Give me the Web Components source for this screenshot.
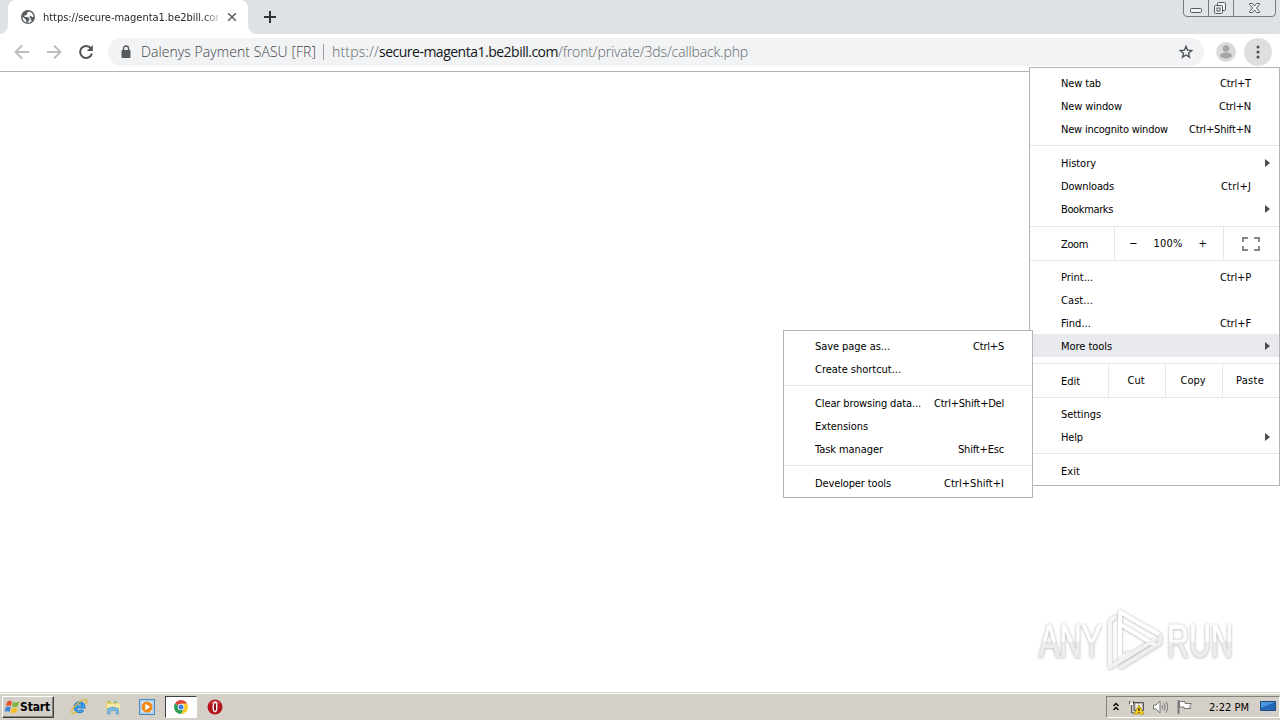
<!DOCTYPE html>
<html lang="en">
<head>
<meta charset="utf-8">
<title>Browser desktop</title>
<style>
  html, body { margin: 0; width: 1280px; height: 720px; overflow: hidden; background: #fff; }
  body { font: 11px/23px "DejaVu Sans Condensed", "DejaVu Sans", sans-serif; font-stretch: condensed; color: #000; }
</style>
</head>
<body>
<desk-top></desk-top>

<script>
/* Small helper: every element here renders once into an open shadow root. */
class Base extends HTMLElement {
  connectedCallback() {
    if (this._mounted) return;
    this._mounted = true;
    this.attachShadow({ mode: 'open' }).innerHTML = this.render();
    if (this.ready) this.ready();
  }
}

/* ── <fit-text w="40"> : a line of text tracked to an exact width ── */
class FitText extends Base {
  render() {
    return `
      <style>
        :host { display: block; white-space: nowrap; flex: none; }
        span { display: inline-block; white-space: pre; vertical-align: top; }
      </style>
      <span><slot></slot></span>`;
  }
  ready() {
    const w = Number(this.getAttribute('w'));
    if (!w) return;
    const span = this.shadowRoot.querySelector('span');
    const natural = span.getBoundingClientRect().width;
    span.style.letterSpacing = (w - natural) / this.textContent.length + 'px';
    this.style.width = w + 'px';
  }
}

/* ── <menu-item label keys w kw arrow active> ── */
class MenuItem extends Base {
  render() {
    const a = n => this.getAttribute(n);
    return `
      <style>
        :host { display: flex; box-sizing: border-box; height: 23px; line-height: 21px; align-items: center;
                padding: 2px 28px 0 31px; position: relative; }
        :host([active]) { background: #e8eaed; }
        .gap { flex: 1; }
        svg { position: absolute; right: 9px; top: 8px; }
      </style>
      <fit-text w="${a('w')}">${a('label')}</fit-text>
      <span class="gap"></span>
      ${a('keys') ? `<fit-text w="${a('kw')}">${a('keys')}</fit-text>` : ''}
      ${this.hasAttribute('arrow') ? '<svg width="5" height="8"><path d="M0 0L5 4L0 8Z" fill="#4b4c4f"/></svg>' : ''}`;
  }
}

class MenuLine extends Base {
  render() {
    return `<style>:host { display: block; height: 1px; margin: 5px 0; background: #e6e7e9; }</style>`;
  }
}

/* ── <menu-strip> : label plus a row of button cells ── */
class MenuStrip extends Base {
  render() {
    return `
      <style>
        :host { display: flex; height: 33px; line-height: 33px; margin: 6px 0 4px;
                border: solid #e6e7e9; border-width: 1px 0; }
        ::slotted(*) { display: flex; align-items: center; justify-content: center;
                       box-sizing: border-box; border-left: 1px solid #e6e7e9; padding-right: 2px; }
        ::slotted([slot="label"]) { border: 0; justify-content: flex-start; padding: 2px 0 0 31px; }
      </style>
      <slot name="label"></slot><slot></slot>`;
  }
}

class MenuPanel extends Base {
  render() {
    return `
      <style>
        :host { display: block; box-sizing: border-box; background: #fff; border: 1px solid #b4b5b7; padding: 3px 0; }
      </style>
      <slot></slot>`;
  }
}

/* ── <tab-strip> ── */
class TabStrip extends Base {
  render() {
    return `
      <style>
        :host { display: flex; height: 34px; background: #dee1e6; align-items: flex-start; }
        .tab { position: relative; box-sizing: border-box; width: 240px; height: 34px; margin-left: 8px; padding: 0 11px 0 12px;
               display: flex; align-items: center; background: #fff; border-radius: 8px 8px 0 0; color: #25282b; }
        .foot { position: absolute; bottom: 0; width: 8px; height: 8px; }
        .l { left: -8px; background: radial-gradient(circle at 0 0, transparent 7.5px, #fff 8px); }
        .r { right: -8px; background: radial-gradient(circle at 100% 0, transparent 7.5px, #fff 8px); }
        .title { width: 175px; margin-left: 7px; overflow: hidden; margin-right: 9px;
                 -webkit-mask-image: linear-gradient(90deg, #000 160px, transparent 180px); }
        .plus { margin: 11px 0 0 16px; }
        .win { margin-left: auto; margin-right: 4px; }
        svg { display: block; flex: none; }
      </style>
      <div class="tab">
        <i class="foot l"></i><i class="foot r"></i>
        <svg width="16" height="16" viewBox="0 0 16 16">
          <circle cx="8" cy="8" r="7" fill="#5a5d61"/>
          <path d="M8.6 2.4L7 4.2 6.8 6 4.4 6.5 4.6 8H8l1.5 1.6-.3 1.8-1.8 2L6.2 13V11L3 8.3 2.4 8.6C2.7 11.6 5 13.8 8 13.8 9 13.8 9.7 13.6 10.3 13.3L12 11.2H10.7V9.4L9.6 8.1 9.8 6.7H11l1 1.2 1.7.2C13.7 5.3 11.5 2.8 8.6 2.4Z" fill="#fff"/>
        </svg>
        <div class="title"><fit-text w="182">https://secure-magenta1.be2bill.com</fit-text></div>
        <svg width="10" height="10" viewBox="0 0 10 10"><path d="M1.2 1.2L8.8 8.8M8.8 1.2L1.2 8.8" stroke="#5f6368" stroke-width="1.600"/></svg>
      </div>
      <svg class="plus" width="12" height="12"><path d="M6 0V12M0 6H12" stroke="#303338" stroke-width="2"/></svg>
      <svg class="win" width="93" height="17" fill="none" stroke="#777a84">
        <path d="M.5 0V13Q.5 16.5 4 16.5H89Q92.500 16.500 92.500 13V0" fill="#e1e4e9"/>
        <path d="M25.500 0V16M50.500 0V16"/>
        <g stroke="#555861">
          <rect x="7.500" y="8.500" width="11" height="4" rx="1" fill="#f2f3f5"/>
          <rect x="34.500" y="2.500" width="8" height="8" rx="1" fill="#f2f3f5"/>
          <rect x="31.500" y="5.500" width="8" height="8" rx="1" fill="#f2f3f5"/>
          <rect x="34" y="8" width="3" height="3"/>
          <path d="M66.500 3.500H69.500L71.500 6 73.500 3.500H76.500V4.500L73.500 8 76.500 11.500V12.500H73.500L71.500 10 69.500 12.500H66.500V11.500L69.500 8 66.500 4.500Z" fill="#f2f3f5"/>
        </g>
      </svg>`;
  }
}

/* ── <tool-bar> : navigation, omnibox, profile and overflow button ── */
class ToolBar extends Base {
  render() {
    return `
      <style>
        :host { display: flex; box-sizing: border-box; height: 38px; padding: 0 8px 1px 14px; align-items: center;
                background: #fff; border-bottom: 1px solid #b3b4b5; }
        svg { display: block; flex: none; }
        .nav { margin-right: 16px; }
        .box { display: flex; align-items: center; box-sizing: border-box; width: 1096px; height: 28px; border-radius: 14px;
               margin-left: -2px; padding: 0 10px 0 12px; background: #f1f3f4; color: #62666b;
               font: 300 14px/28px "Open Sans", "Noto Sans", sans-serif; }
        .bar { width: 1px; height: 16px; background: #9b9ea2; margin: 0 8px 0 7px; }
        .org { margin-left: 9px; color: #3f4347; }
        .host { color: #15171a; font-weight: 400; }
        .star { margin-left: auto; }
        .me { margin-left: 12px; }
        .more { display: grid; place-items: center; width: 28px; height: 28px; border-radius: 50%; background: #dfdfe0; margin-left: 8px; }
      </style>
      <svg class="nav" width="16" height="16"><path d="M15 8H2M8 1.500L1.500 8L8 14.500" fill="none" stroke="#babcbe" stroke-width="1.800"/></svg>
      <svg class="nav" width="16" height="16"><path d="M1 8H14M8 1.500L14.500 8L8 14.500" fill="none" stroke="#babcbe" stroke-width="1.800"/></svg>
      <svg class="nav" width="16" height="16"><path d="M12.800 4.200A6 6 0 1 0 13.900 9.500" fill="none" stroke="#4d5156" stroke-width="2"/><path d="M14.800 1V7H8.800Z" fill="#4d5156"/></svg>
      <div class="box">
        <svg width="12" height="14"><rect x="1.500" y="5" width="9" height="8" rx="1" fill="#55595e"/><path d="M3.500 6V3.500A2.500 2.500 0 0 1 8.500 3.500V6" fill="none" stroke="#55595e" stroke-width="1.400"/></svg>
        <fit-text class="org" w="175">Dalenys Payment SASU [FR]</fit-text>
        <i class="bar"></i>
        <fit-text w="47">https://</fit-text><fit-text class="host" w="179">secure-magenta1.be2bill.com</fit-text><fit-text w="190">/front/private/3ds/callback.php</fit-text>
        <svg class="star" width="16" height="16"><path d="M8 2.300L9.500 6.100 13.700 6.500 10.500 9.200 11.500 13.200 8 11 4.500 13.200 5.500 9.200 2.300 6.500 6.500 6.100Z" fill="none" stroke="#50545a" stroke-width="1.400"/></svg>
      </div>
      <svg class="me" width="20" height="20"><circle cx="10" cy="10" r="10" fill="#dadbdc"/><circle cx="10" cy="6.500" r="3.200" fill="#a4a5a7"/><ellipse cx="10" cy="13.500" rx="6" ry="3" fill="#a4a5a7"/></svg>
      <div class="more"><svg width="4" height="14" fill="#4d5156"><circle cx="2" cy="2" r="1.500"/><circle cx="2" cy="7" r="1.500"/><circle cx="2" cy="12" r="1.500"/></svg></div>`;
  }
}

/* ── <any-mark> : embossed watermark, white shapes on a soft grey shadow ── */
class AnyMark extends Base {
  render() {
    return `
      <style>
        :host { display: block; width: 198px; height: 68px;
                filter: drop-shadow(0 0 1.5px rgba(0,0,0,.24)) drop-shadow(0 1px 1px rgba(0,0,0,.1)); }
        svg { display: block; overflow: visible; }
        text { font: 46px "Liberation Sans", Arial, sans-serif; stroke: url(#split); stroke-width: 1; }
      </style>
      <svg width="198" height="68" fill="none" stroke-width="4" stroke-linejoin="round" stroke-linecap="round">
        <linearGradient id="split" gradientUnits="userSpaceOnUse" x1="0" y1="0" x2="0" y2="68">
          <stop offset=".49" stop-color="#fff"/><stop offset=".5" stop-color="#ececec"/>
        </linearGradient>
        <text x="2" y="49" textLength="63" lengthAdjust="spacingAndGlyphs" fill="url(#split)">ANY</text>
        <g transform="translate(69 0)">
          <path d="M4 59V13L9 9" stroke="#f6f6f6"/>
          <path d="M14 50V4L54 27" stroke="#fff"/>
          <path d="M14 16L49 37" stroke="#fff"/>
          <path d="M54 27V35L15 59" stroke="#eee"/>
          <path d="M4 59L47 33M14 50L22 45" stroke="#f1f1f1"/>
        </g>
        <text x="130" y="49" textLength="66" lengthAdjust="spacingAndGlyphs" fill="url(#split)">RUN</text>
      </svg>`;
  }
}

/* ── <task-bar> ── */
class TaskBar extends Base {
  render() {
    return `
      <style>
        :host { display: flex; box-sizing: border-box; height: 28px; align-items: center; padding: 1px 0 1px 2px; background: #d4d0c8;
                border-top: 1px solid #d4d0c8; box-shadow: inset 0 1px #fff; }
        svg { display: block; flex: none; }
        .start { display: flex; align-items: center; box-sizing: border-box; width: 52px; height: 22px; padding-left: 1px;
                 border: 1px solid; border-color: #fff #404040 #404040 #fff; box-shadow: inset -1px -1px #85827c;
                 font: 700 12px/20px "DejaVu Sans Condensed", sans-serif; }
        .start fit-text { padding-top: 1px; }
        .app { display: grid; place-items: center; box-sizing: border-box; width: 33.600px; height: 22px; }
        .app.on { width: 32px; background: #fff; border: 1px solid; border-color: #404040 #fff #fff #404040; margin: 0 1px; }
        .tray { display: flex; align-items: center; box-sizing: border-box; height: 22px; width: 174px; margin-left: auto; padding: 0 3px 0 6px;
                border: 1px solid; border-color: #85827c #fff #fff #85827c; }
      </style>
      <div class="start">
        <svg width="16" height="16"><path d="M3 3Q5 1 8 2.500L7 7Q4 6 2 7Z" fill="#e6532a"/><path d="M9 3Q12 4.500 15 2.500L14 7Q11 9 8 7.500Z" fill="#7db63a"/><path d="M1.700 8.200Q4 7 6.700 8.200L5.500 13Q3 11.500.500 13Z" fill="#3f86d8"/><path d="M7.800 8.700Q11 10 13.700 8.300L12.500 13Q9.500 15 6.500 13.500Z" fill="#f5bf23"/></svg>
        <fit-text w="30">Start</fit-text>
      </div>
      <div class="app" style="margin-left:9px">
        <svg width="17" height="17" fill="none"><path d="M4.500 9H13A4.500 4.500 0 1 0 12 12" stroke="#1c7bd0" stroke-width="3"/><path d="M4.500 9H13A4.500 4.500 0 1 0 12 12" stroke="#53b8f0" stroke-width="1"/><path d="M1 15C-1 11 11 0 15.500 2Q17 3 14.500 6M1 15Q3 16 6 14" stroke="#e2b532" stroke-width="1.300"/></svg>
      </div>
      <div class="app">
        <svg width="16" height="16"><path d="M1 2H6L7 4H14V12H1Z" fill="#ecd273"/><path d="M2 5H15V12H2Z" fill="#f8eaa5"/><path d="M3 3H5M9 3H12" stroke="#48a963"/><path d="M2.500 15V9.500Q8 6.500 13.500 9.500V15H11V11.500H5V15Z" fill="#78bce4" stroke="#4d98c9" stroke-width=".6"/></svg>
      </div>
      <div class="app">
        <svg width="16" height="16"><rect x=".5" y=".5" width="15" height="15" fill="#a9cdee" stroke="#4b8bc4"/><rect x="2.500" y="2.500" width="11" height="11" fill="#dceaf5"/><circle cx="8" cy="8" r="5.500" fill="#f58a16"/><path d="M6.300 4.800L11.300 8L6.300 11.200Z" fill="#fff"/></svg>
      </div>
      <div class="app on">
        <svg width="14" height="14" viewBox="-7 -7 14 14"><path d="M0 0L-6.060-3.500A7 7 0 0 1 6.060-3.500Z" fill="#df4436"/><path d="M0 0L-6.060-3.500A7 7 0 0 0 0 7L3 2Z" fill="#2c9e56"/><path d="M0-3.500H6.060A7 7 0 0 1 0 7L3 1.500Z" fill="#fbc927"/><circle r="3.300" fill="#fff"/><circle r="2.500" fill="#3c7de0"/></svg>
      </div>
      <div class="app">
        <svg width="16" height="16"><circle cx="8" cy="8" r="7.500" fill="#b3131b"/><path d="M3 4Q8-1 13 4Q8 6 3 4Z" fill="#d85c60"/><ellipse cx="8" cy="8" rx="1.800" ry="4.700" fill="#871016" stroke="#fff" stroke-width="1.400"/></svg>
      </div>
      <div class="tray">
        <svg width="6" height="10" fill="none" stroke="#000" stroke-width="1.300"><path d="M.5 4L3 1.500L5.500 4M.5 8L3 5.500L5.500 8"/></svg>
        <svg width="17" height="16" style="margin-left:9px"><path d="M6 3.500H15.500V11.500H6Z" fill="#b5b5b3" stroke="#555"/><path d="M7.500 5H14V10H7.500Z" fill="#ecebe7"/><path d="M1.500 2V5H5.500V2M3.500 5V14H8" fill="none" stroke="#555"/><path d="M2 4H5V6H2Z" fill="#fff"/><path d="M11 6L16 15H6Z" fill="#f7d31d" stroke="#a98a10" stroke-width=".7"/><path d="M11 9V12M11 13V14" stroke="#222" stroke-width="1.300"/></svg>
        <svg width="17" height="16" style="margin-left:7px" fill="none" stroke="#777"><path d="M1.500 6H4L8 2V14L4 10H1.500Z" fill="#fff"/><path d="M10 6Q11.500 8 10 10M12 4Q14.500 8 12 12M14 2.500Q17.500 8 14 13.500"/></svg>
        <svg width="17" height="16" style="margin-left:7px"><path d="M2.500 1V15" stroke="#777" stroke-width="2"/><path d="M3.500 2.500H9V4.500H15.500L13.500 7.500 15 9.500H8V8H3.500Z" fill="#fff" stroke="#777"/></svg>
        <fit-text w="40" style="margin-left:16px;line-height:18px;padding-top:2px">2:22 PM</fit-text>
        <svg width="16" height="14" style="margin-left:auto"><path d="M.5 1.500H15.500V10.500H.5Z" fill="#2466b8" stroke="#244a7c"/><path d="M1 2H15L1 8Z" fill="#4a97df"/><path d="M5 13H11" stroke="#b8c9da"/></svg>
      </div>`;
  }
}

/* ── <desk-top> : window, menus over the page, taskbar ── */
class DeskTop extends Base {
  render() {
    return `
      <style>
        :host { display: flex; flex-direction: column; position: relative; width: 1280px; height: 720px; background: #fff; }
        .page { flex: 1; }
        .over { position: absolute; }
        .main { left: 1029px; top: 67px; width: 251px; }
        .sub { left: 783px; top: 330px; width: 250px; }
        .mark { left: 1037px; top: 608px; }
      </style>
      <tab-strip></tab-strip>
      <tool-bar></tool-bar>
      <div class="page"></div>
      <task-bar></task-bar>
      <any-mark class="over mark"></any-mark>
      <menu-panel class="over main">
        <menu-item label="New tab" w="40" keys="Ctrl+T" kw="31"></menu-item>
        <menu-item label="New window" w="61" keys="Ctrl+N" kw="32"></menu-item>
        <menu-item label="New incognito window" w="107" keys="Ctrl+Shift+N" kw="62"></menu-item>
        <menu-line></menu-line>
        <menu-item label="History" w="35" arrow></menu-item>
        <menu-item label="Downloads" w="53" keys="Ctrl+J" kw="30"></menu-item>
        <menu-item label="Bookmarks" w="52" arrow></menu-item>
        <menu-strip>
          <div slot="label" style="width:84px"><fit-text w="27">Zoom</fit-text></div>
          <div style="width:109px;gap:16px"><span>−</span><fit-text w="29">100%</fit-text><span>+</span></div>
          <div style="width:56px"><svg width="18" height="14" fill="none" stroke="#85888b" stroke-width="2"><path d="M1 5V1H6M12 1H17V5M17 9V13H12M6 13H1V9"/></svg></div>
        </menu-strip>
        <menu-item label="Print..." w="32" keys="Ctrl+P" kw="31"></menu-item>
        <menu-item label="Cast..." w="32"></menu-item>
        <menu-item label="Find..." w="30" keys="Ctrl+F" kw="31"></menu-item>
        <menu-item label="More tools" w="51" arrow active></menu-item>
        <menu-strip>
          <div slot="label" style="width:78px"><fit-text w="19">Edit</fit-text></div>
          <div style="width:57px"><fit-text w="17">Cut</fit-text></div>
          <div style="width:57px"><fit-text w="25">Copy</fit-text></div>
          <div style="width:57px"><fit-text w="28">Paste</fit-text></div>
        </menu-strip>
        <menu-item label="Settings" w="40"></menu-item>
        <menu-item label="Help" w="22" arrow></menu-item>
        <menu-line></menu-line>
        <menu-item label="Exit" w="19"></menu-item>
      </menu-panel>
      <menu-panel class="over sub">
        <menu-item label="Save page as..." w="75" keys="Ctrl+S" kw="31"></menu-item>
        <menu-item label="Create shortcut..." w="86"></menu-item>
        <menu-line></menu-line>
        <menu-item label="Clear browsing data..." w="106" keys="Ctrl+Shift+Del" kw="70"></menu-item>
        <menu-item label="Extensions" w="53"></menu-item>
        <menu-item label="Task manager" w="68" keys="Shift+Esc" kw="46"></menu-item>
        <menu-line></menu-line>
        <menu-item label="Developer tools" w="76" keys="Ctrl+Shift+I" kw="60"></menu-item>
      </menu-panel>`;
  }
}

/* Innermost elements last, so the page tree exists and is laid out when text is measured. */
customElements.define('desk-top', DeskTop);
customElements.define('tab-strip', TabStrip);
customElements.define('tool-bar', ToolBar);
customElements.define('any-mark', AnyMark);
customElements.define('task-bar', TaskBar);
customElements.define('menu-panel', MenuPanel);
customElements.define('menu-strip', MenuStrip);
customElements.define('menu-line', MenuLine);
customElements.define('menu-item', MenuItem);
customElements.define('fit-text', FitText);
</script>
</body>
</html>
